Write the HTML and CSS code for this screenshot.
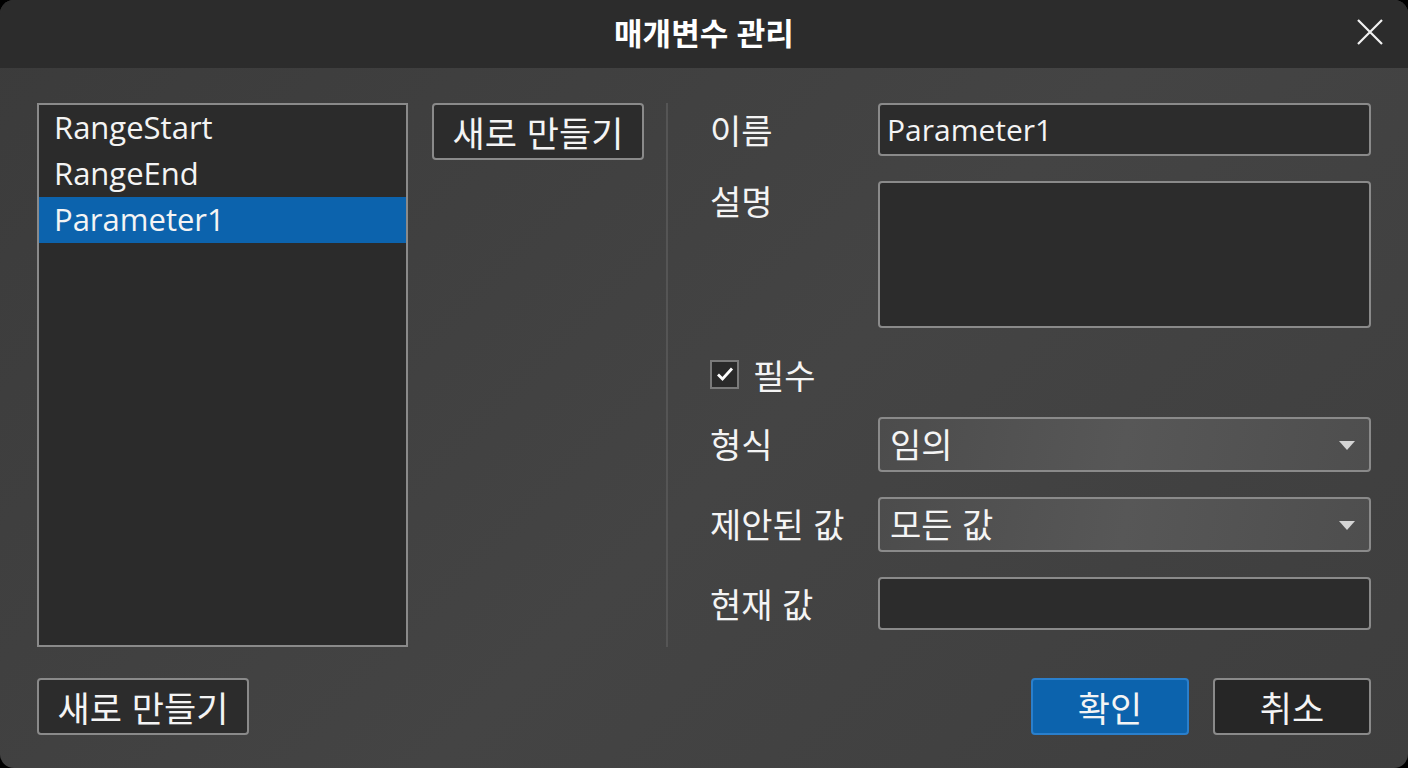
FILE: index.html
```html
<!DOCTYPE html>
<html lang="ko">

<head>
    <meta charset="UTF-8">
    <meta name="viewport" content="width=device-width, initial-scale=1.0">
    <title>매개변수 관리</title>
    <link rel="stylesheet" href="styles.css">
</head>

<body>
    <div class="dialog">
        <div class="title-bar">
            <span></span>
            <h1 class="title">매개변수 관리</h1>
            <button class="btn-close" aria-label="닫기">
                <svg width="26" height="26" viewBox="0 0 26 26">
                    <path d="M1 1 L25 25 M25 1 L1 25" stroke="#f2f2f2" stroke-width="2.2" fill="none" />
                </svg>
            </button>
        </div>

        <div class="dialog-body">
            <div class="main-row">
                <ul class="param-list">
                    <li>RangeStart</li>
                    <li>RangeEnd</li>
                    <li class="selected">Parameter1</li>
                </ul>

                <div class="side-actions">
                    <button class="btn">새로 만들기</button>
                </div>

                <div class="separator"></div>

                <div class="param-form">
                    <label class="field-label">이름</label>
                    <div class="text-box">Parameter1</div>

                    <label class="field-label label-top">설명</label>
                    <div class="text-box text-area"></div>

                    <div class="check-row">
                        <span class="checkbox">
                            <svg width="18" height="16" viewBox="0 0 18 16">
                                <path d="M2 8.5 L6.5 13 L16 2.5" stroke="#fff" stroke-width="2.8" fill="none" />
                            </svg>
                        </span>
                        <span>필수</span>
                    </div>

                    <label class="field-label">형식</label>
                    <div class="select-box">임의<span class="caret"></span></div>

                    <label class="field-label">제안된 값</label>
                    <div class="select-box">모든 값<span class="caret"></span></div>

                    <label class="field-label">현재 값</label>
                    <div class="text-box"></div>
                </div>
            </div>

            <div class="footer">
                <button class="btn btn-new">새로 만들기</button>
                <div class="footer-right">
                    <button class="btn btn-primary">확인</button>
                    <button class="btn btn-cancel">취소</button>
                </div>
            </div>
        </div>
    </div>
</body>

</html>
```

FILE: styles.css
```css
/* Page */
html {
    background: #000;
}

body {
    margin: 0;
    font-family: 'Open Sans', 'Noto Sans CJK KR', sans-serif;
    color: #f4f4f4;
}

/* Dialog window */
.dialog {
    width: 1408px;
    height: 768px;
    border-radius: 14px;
    overflow: hidden;
    background: linear-gradient(135deg, #3b3b3b, #444444 55%, #3e3e3e);
    display: flex;
    flex-direction: column;
}

.title-bar {
    height: 68px;
    flex-shrink: 0;
    background: #2c2c2c;
    display: grid;
    grid-template-columns: 1fr auto 1fr;
    align-items: center;
}

.title {
    margin: 0 0 4px 0;
    font-family: 'Noto Sans CJK KR', sans-serif;
    font-size: 31px;
    line-height: 40px;
    font-weight: 700;
    color: #fff;
}

.btn-close {
    justify-self: end;
    margin-right: 24px;
    margin-bottom: 4px;
    width: 28px;
    height: 28px;
    padding: 0;
    border: none;
    background: none;
    display: flex;
    align-items: center;
    justify-content: center;
}

.dialog-body {
    flex: 1;
    padding: 35px 37px 33px 37px;
    display: flex;
    flex-direction: column;
}

.main-row {
    display: flex;
    height: 544px;
}

/* Parameter list */
.param-list {
    list-style: none;
    margin: 0;
    padding: 0;
    width: 367px;
    border: 2px solid #8a8a8a;
    background: #2b2b2b;
    flex-shrink: 0;
}

.param-list li {
    height: 46px;
    line-height: 44px;
    padding-left: 15px;
    font-size: 31px;
}

.param-list li.selected {
    background: #0c63ad;
}

.side-actions {
    margin-left: 24px;
}

.separator {
    width: 2px;
    background: #555;
    margin-left: 22px;
}

/* Buttons */
.btn {
    font-family: 'Noto Sans CJK KR', sans-serif;
    font-size: 35px;
    line-height: 40px;
    color: #f4f4f4;
    background: #2c2c2c;
    border: 2px solid #8a8a8a;
    border-radius: 4px;
    padding: 0;
    cursor: pointer;
}

.side-actions .btn {
    width: 212px;
    height: 57px;
}

/* Form */
.param-form {
    margin-left: 42px;
    flex: 1;
    display: grid;
    grid-template-columns: 168px 1fr;
    grid-auto-rows: min-content;
    row-gap: 25px;
    align-items: start;
}

.field-label {
    font-family: 'Noto Sans CJK KR', sans-serif;
    font-size: 34px;
    line-height: 53px;
}

.label-top {
    margin-top: -7px;
}

.text-box {
    height: 49px;
    border: 2px solid #8a8a8a;
    border-radius: 4px;
    background: #2c2c2c;
    font-size: 30px;
    line-height: 49px;
    padding-left: 7px;
}

.text-area {
    height: 143px;
}

.check-row {
    grid-column: 1 / 3;
    display: flex;
    align-items: center;
    gap: 14px;
    height: 40px;
    margin: 1px 0 -2px 0;
    font-family: 'Noto Sans CJK KR', sans-serif;
    font-size: 34px;
}

.checkbox {
    width: 25px;
    height: 25px;
    border: 2px solid #7a7a7a;
    background: #2a2a2a;
    display: flex;
    align-items: center;
    justify-content: center;
}

.select-box {
    position: relative;
    height: 51px;
    border: 2px solid #8a8a8a;
    border-radius: 4px;
    background: linear-gradient(100deg, #4c4c4c, #575757 50%, #4e4e4e);
    font-family: 'Noto Sans CJK KR', sans-serif;
    font-size: 34px;
    line-height: 49px;
    padding-left: 10px;
}

.caret {
    position: absolute;
    right: 14px;
    top: 22px;
    border-left: 8px solid transparent;
    border-right: 8px solid transparent;
    border-top: 9px solid #d4d4d4;
}

/* Footer */
.footer {
    margin-top: 31px;
    display: flex;
    justify-content: space-between;
}

.btn-new {
    width: 212px;
    height: 57px;
}

.footer-right {
    display: flex;
    gap: 24px;
}

.btn-primary,
.btn-cancel {
    width: 158px;
    height: 57px;
}

.btn-primary {
    background: #0c63ad;
    border-color: #2a7fcc;
}

.btn-cancel {
    background: #262626;
}
```
